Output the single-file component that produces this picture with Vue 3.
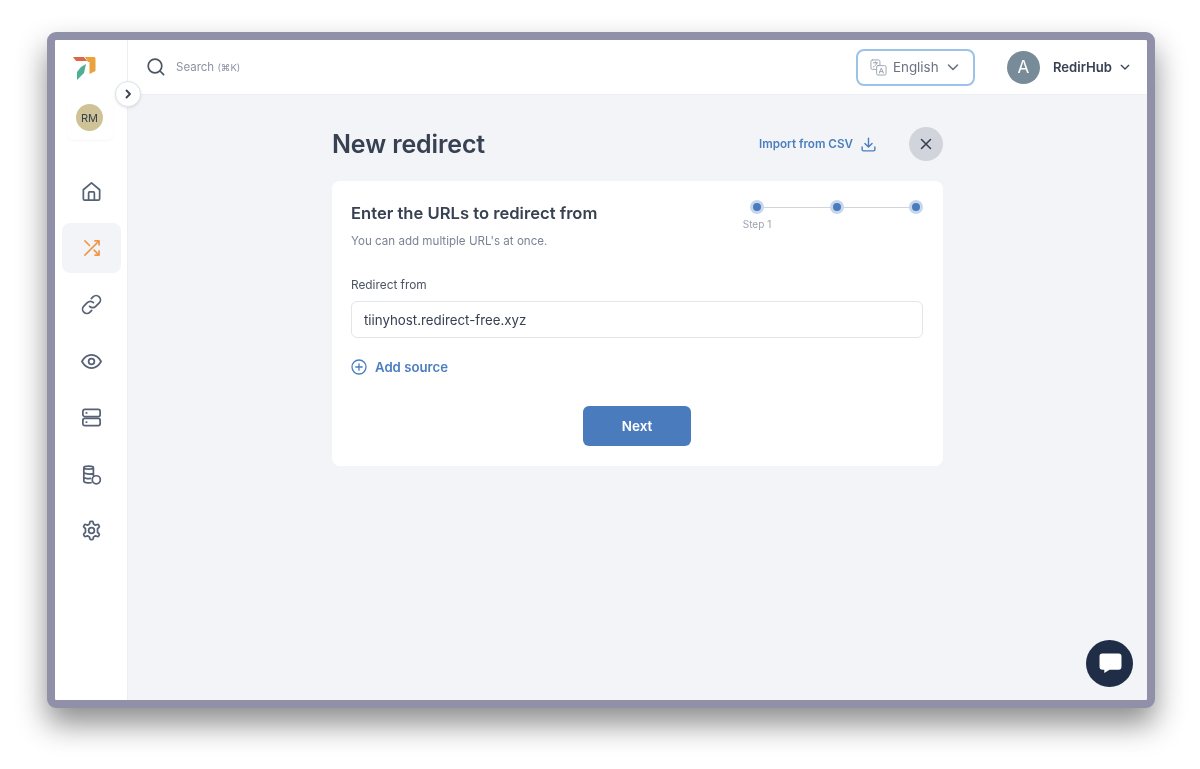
<script setup>
const navItems = [
  { id: 'home', active: false },
  { id: 'shuffle', active: true },
  { id: 'link', active: false },
  { id: 'eye', active: false },
  { id: 'server', active: false },
  { id: 'db', active: false },
  { id: 'cog', active: false }
]
</script>

<template>
  <div class="page">
    <div class="window">
      <aside class="sidebar">
        <svg class="logo" viewBox="0 0 24 24" width="24" height="24">
          <path d="M1 1 L12 1 L15 5 L4 5 Z" fill="#d9694a" />
          <path d="M13 1 L22 1 Q23.5 1 23.5 2.5 L23.5 15 L17.5 18 L17.5 6 L16 6 Z" fill="#eba23c" />
          <path d="M9 11 L14 8 L12 17 L5 24 L5 16 Z" fill="#4fae94" />
        </svg>
        <div class="org">
          <div class="org-avatar">RM</div>
        </div>
        <nav class="nav">
          <div v-for="item in navItems" :key="item.id" class="nav-item" :class="{ active: item.active }">
            <svg v-if="item.id === 'home'" viewBox="0 0 24 24" class="ico">
              <path d="M3.5 10.2 L12 3 L20.5 10.2 V19.5 A1.5 1.5 0 0 1 19 21 H5 A1.5 1.5 0 0 1 3.5 19.5 Z" />
              <path d="M9 21 V13.5 A1 1 0 0 1 10 12.5 H14 A1 1 0 0 1 15 13.5 V21" />
            </svg>
            <svg v-else-if="item.id === 'shuffle'" viewBox="0 0 24 24" class="ico orange">
              <path d="M15.5 3.5 H20.5 V8.5 M20.5 3.5 L3.5 20.5 M15.5 20.5 H20.5 V15.5 M14.5 14.5 L20.5 20.5 M3.5 3.5 L9 9" />
            </svg>
            <svg v-else-if="item.id === 'link'" viewBox="0 0 24 24" class="ico">
              <path d="M10 14 A4.5 4.5 0 0 0 16.4 14 L20 10.4 A4.5 4.5 0 0 0 13.6 4 L11.8 5.8" />
              <path d="M14 10 A4.5 4.5 0 0 0 7.6 10 L4 13.6 A4.5 4.5 0 0 0 10.4 20 L12.2 18.2" />
            </svg>
            <svg v-else-if="item.id === 'eye'" viewBox="0 0 24 24" class="ico">
              <path d="M2 12 C4.5 7.5 8 5.2 12 5.2 C16 5.2 19.5 7.5 22 12 C19.5 16.5 16 18.8 12 18.8 C8 18.8 4.5 16.5 2 12 Z" />
              <circle cx="12" cy="12" r="3" />
            </svg>
            <svg v-else-if="item.id === 'server'" viewBox="0 0 24 24" class="ico">
              <rect x="3" y="3.5" width="18" height="7.5" rx="2" />
              <rect x="3" y="13" width="18" height="7.5" rx="2" />
              <path d="M6.5 7.2 H7 M6.5 16.8 H7" />
            </svg>
            <svg v-else-if="item.id === 'db'" viewBox="0 0 24 24" class="ico">
              <path d="M4 4.8 C4 2.6 14 2.6 14 4.8 V13 M4 4.8 V19 C4 20.5 8 21 11.5 20.6 M4 4.8 C4 7 14 7 14 4.8 M4 9.5 C4 11.5 10 12 14 11 M4 14.5 C4 16 8 16.5 11 16" />
              <circle cx="17" cy="17.5" r="4.2" />
            </svg>
            <svg v-else viewBox="0 0 24 24" class="ico">
              <path d="M10.3 3.2 A1 1 0 0 1 11.3 2.4 H12.7 A1 1 0 0 1 13.7 3.2 L14.1 5.2 L16.2 6.4 L18.2 5.7 A1 1 0 0 1 19.4 6.2 L20.1 7.4 A1 1 0 0 1 19.9 8.6 L18.3 10 V14 L19.9 15.4 A1 1 0 0 1 20.1 16.6 L19.4 17.8 A1 1 0 0 1 18.2 18.3 L16.2 17.6 L14.1 18.8 L13.7 20.8 A1 1 0 0 1 12.7 21.6 H11.3 A1 1 0 0 1 10.3 20.8 L9.9 18.8 L7.8 17.6 L5.8 18.3 A1 1 0 0 1 4.6 17.8 L3.9 16.6 A1 1 0 0 1 4.1 15.4 L5.7 14 V10 L4.1 8.6 A1 1 0 0 1 3.9 7.4 L4.6 6.2 A1 1 0 0 1 5.8 5.7 L7.8 6.4 L9.9 5.2 Z" />
              <circle cx="12" cy="12" r="3" />
            </svg>
          </div>
        </nav>
      </aside>

      <button class="collapse" type="button" aria-label="Expand">
        <svg viewBox="0 0 12 12" width="12" height="12">
          <path d="M4.5 2.5 L8 6 L4.5 9.5" fill="none" stroke="#374151" stroke-width="1.8" stroke-linecap="round" stroke-linejoin="round" />
        </svg>
      </button>

      <div class="main">
        <header class="topbar">
          <div class="search">
            <svg viewBox="0 0 20 20" width="20" height="20" class="search-ico">
              <circle cx="9" cy="9" r="6.8" />
              <path d="M14 14 L17.6 17.6" />
            </svg>
            <span class="search-text">Search <small>(⌘K)</small></span>
          </div>
          <div class="lang">
            <svg viewBox="0 0 18 18" width="17" height="17" class="lang-ico">
              <rect x="1" y="1" width="9.5" height="10" rx="1.5" />
              <rect x="7" y="7" width="10" height="10" rx="1.5" fill="#fff" />
              <path d="M9.8 15 L12 9.5 L14.2 15 M10.5 13.4 H13.5 M3.5 4 H8 M5.7 3 V4 M7.2 4 C6.8 6 5.5 7.5 3.5 8.5" />
            </svg>
            <span class="lang-text">English</span>
            <svg viewBox="0 0 12 12" width="12" height="12" class="chev grey"><path d="M1.5 4 L6 8.5 L10.5 4" /></svg>
          </div>
          <div class="user">
            <div class="user-avatar">A</div>
            <span class="user-name">RedirHub</span>
            <svg viewBox="0 0 12 12" width="10" height="10" class="chev dark"><path d="M1.5 4 L6 8.5 L10.5 4" /></svg>
          </div>
        </header>

        <main class="content">
          <div class="column">
            <div class="title-row">
              <h1 class="title">New redirect</h1>
              <div class="title-actions">
                <span class="import">Import from CSV</span>
                <svg viewBox="0 0 24 24" width="17" height="17" class="import-ico">
                  <path d="M12 3 V15 M7 10.5 L12 15.5 L17 10.5 M3 15.5 V19 A2 2 0 0 0 5 21 H19 A2 2 0 0 0 21 19 V15.5" />
                </svg>
                <button class="close" type="button" aria-label="Close">
                  <svg viewBox="0 0 12 12" width="12" height="12"><path d="M1.5 1.5 L10.5 10.5 M10.5 1.5 L1.5 10.5" /></svg>
                </button>
              </div>
            </div>

            <section class="card">
              <div class="card-head">
                <div>
                  <h2 class="card-title">Enter the URLs to redirect from</h2>
                  <p class="card-sub">You can add multiple URL's at once.</p>
                </div>
                <div class="stepper">
                  <div class="step"><span class="dot"></span><span class="step-label">Step 1</span></div>
                  <span class="line"></span>
                  <div class="step"><span class="dot"></span></div>
                  <span class="line"></span>
                  <div class="step"><span class="dot"></span></div>
                </div>
              </div>

              <div class="field-label">Redirect from</div>
              <div class="input">tiinyhost.redirect-free.xyz</div>

              <div class="add">
                <svg viewBox="0 0 16 16" width="16" height="16">
                  <circle cx="8" cy="8" r="7" />
                  <path d="M8 4.8 V11.2 M4.8 8 H11.2" />
                </svg>
                <span>Add source</span>
              </div>

              <div class="actions">
                <button class="next" type="button">Next</button>
              </div>
            </section>
          </div>
        </main>

        <button class="chat" type="button" aria-label="Chat">
          <svg viewBox="0 0 24 22" width="23" height="21">
            <path d="M3.5 0.5 H20.5 A3 3 0 0 1 23.5 3.5 V14.5 A3 3 0 0 1 20.5 17.5 H11 L5.5 21 V17.5 H3.5 A3 3 0 0 1 0.5 14.5 V3.5 A3 3 0 0 1 3.5 0.5 Z" fill="#fff" />
          </svg>
        </button>
      </div>
    </div>
  </div>
</template>

<style scoped>
.page {
  width: 1200px;
  height: 769px;
  box-sizing: border-box;
  padding: 32px 45px 61px 47px;
  background: #fff;
  font-family: Inter, "Liberation Sans", sans-serif;
  overflow: hidden;
}
.window {
  position: relative;
  display: flex;
  height: 100%;
  box-sizing: border-box;
  border: 8px solid #9090a8;
  border-radius: 9px;
  background: #f2f4f8;
  box-shadow: 0 16px 30px rgba(0, 0, 0, 0.45);
  filter: blur(0.45px);
}
.sidebar {
  width: 73px;
  flex: none;
  box-sizing: border-box;
  background: #fff;
  border-right: 1px solid #eceef3;
  border-radius: 3px 0 0 3px;
  display: flex;
  flex-direction: column;
  align-items: center;
  padding-top: 16px;
}
.logo {
  margin-left: -14px;
  flex: none;
}
.org {
  margin-top: 16px;
  margin-left: -3px;
  width: 46px;
  height: 44px;
  box-sizing: border-box;
  border-radius: 6px;
  box-shadow: 0 1px 2px rgba(0, 0, 0, 0.04);
  display: flex;
  justify-content: center;
  padding-top: 8px;
}
.org-avatar {
  width: 27px;
  height: 27px;
  border-radius: 50%;
  background: #cfc296;
  color: #374151;
  font-size: 11px;
  font-weight: 400;
  display: flex;
  align-items: center;
  justify-content: center;
}
.nav {
  margin-top: 26.5px;
  width: 100%;
  display: flex;
  flex-direction: column;
  align-items: center;
  gap: 6.5px;
}
.nav-item {
  width: 59px;
  height: 50px;
  margin-left: 1px;
  border-radius: 8px;
  display: flex;
  align-items: center;
  justify-content: center;
}
.nav-item.active {
  background: #f2f4f8;
}
.ico {
  width: 23px;
  height: 23px;
  fill: none;
  stroke: #566175;
  stroke-width: 1.8;
  stroke-linecap: round;
  stroke-linejoin: round;
}
.ico.orange {
  width: 20px;
  height: 20px;
  stroke: #f0984a;
  stroke-width: 2;
}
.collapse {
  position: absolute;
  left: 60px;
  top: 41px;
  width: 26px;
  height: 26px;
  padding: 0;
  border: 1px solid #dfe2e8;
  border-radius: 50%;
  background: #fff;
  box-shadow: 0 1px 3px rgba(0, 0, 0, 0.1);
  display: flex;
  align-items: center;
  justify-content: center;
  z-index: 2;
}
.main {
  position: relative;
  flex: 1;
  min-width: 0;
  display: flex;
  flex-direction: column;
}
.topbar {
  height: 55px;
  flex: none;
  box-sizing: border-box;
  background: #fff;
  border-bottom: 1px solid #eceef3;
  border-radius: 0 3px 0 0;
  display: flex;
  align-items: center;
  padding: 0 17px 0 18px;
}
.search {
  display: flex;
  align-items: center;
  gap: 10px;
  margin-right: auto;
}
.search-ico {
  fill: none;
  stroke: #4b5563;
  stroke-width: 1.7;
  stroke-linecap: round;
}
.search-text {
  font-size: 11.5px;
  color: #8a93a3;
}
.search-text small {
  font-size: 9.5px;
}
.lang {
  width: 119px;
  height: 37px;
  box-sizing: border-box;
  border: 2px solid #9dc2ea;
  border-radius: 8px;
  display: flex;
  align-items: center;
  padding-left: 12px;
  margin-right: 32px;
}
.lang-ico {
  fill: none;
  stroke: #9ca3af;
  stroke-width: 1;
  stroke-linejoin: round;
  stroke-linecap: round;
  flex: none;
}
.lang-text {
  margin-left: 6px;
  font-size: 13.4px;
  color: #6b7280;
}
.chev {
  fill: none;
  stroke-width: 1.6;
  stroke-linecap: round;
  stroke-linejoin: round;
  flex: none;
}
.chev.grey {
  stroke: #6b7280;
  margin-left: 8px;
}
.chev.dark {
  stroke: #374151;
  margin-left: 8px;
}
.user {
  display: flex;
  align-items: center;
}
.user-avatar {
  width: 33px;
  height: 33px;
  border-radius: 50%;
  background: #778c98;
  color: #fff;
  font-size: 17px;
  display: flex;
  align-items: center;
  justify-content: center;
}
.user-name {
  margin-left: 13px;
  font-size: 13.1px;
  font-weight: 600;
  color: #374151;
}
.content {
  flex: 1;
  display: flex;
  justify-content: center;
  padding: 32px 1px 0 0;
  min-height: 0;
}
.column {
  width: 611px;
}
.title-row {
  display: flex;
  align-items: center;
  justify-content: space-between;
  height: 34px;
}
.title {
  margin: 0 0 0 0.5px;
  font-size: 25px;
  font-weight: 600;
  letter-spacing: -0.12px;
  color: #374151;
}
.title-actions {
  display: flex;
  align-items: center;
}
.import {
  font-size: 11.65px;
  font-weight: 600;
  color: #4a7ebf;
}
.import-ico {
  margin-left: 7px;
  fill: none;
  stroke: #4a7ebf;
  stroke-width: 2;
  stroke-linecap: round;
  stroke-linejoin: round;
}
.close {
  margin-left: 31.5px;
  width: 34px;
  height: 34px;
  padding: 0;
  border: 0;
  border-radius: 50%;
  background: #d1d5db;
  display: flex;
  align-items: center;
  justify-content: center;
}
.close svg {
  fill: none;
  stroke: #374151;
  stroke-width: 1.6;
  stroke-linecap: round;
}
.card {
  margin-top: 20px;
  background: #fff;
  border-radius: 8px;
  padding: 20px 19.5px;
}
.card-head {
  display: flex;
  justify-content: space-between;
  align-items: flex-start;
}
.card-title {
  margin: 2px 0 0;
  font-size: 16.6px;
  line-height: 20px;
  font-weight: 600;
  color: #374151;
}
.card-sub {
  margin: 10px 0 0;
  font-size: 11.6px;
  line-height: 16px;
  color: #7b8494;
}
.stepper {
  display: flex;
  align-items: flex-start;
  margin-top: -1px;
}
.step {
  position: relative;
  width: 14px;
  height: 14px;
}
.dot {
  display: block;
  box-sizing: border-box;
  width: 14px;
  height: 14px;
  border: 3.5px solid #c6d6ec;
  border-radius: 50%;
  background: #4a7bbd;
}
.step-label {
  position: absolute;
  top: 17px;
  left: 50%;
  transform: translateX(-50%);
  font-size: 10px;
  line-height: 14px;
  white-space: nowrap;
  color: #9ca3af;
}
.line {
  width: 65.5px;
  height: 1.5px;
  margin-top: 6.5px;
  background: #d1d5db;
}
.field-label {
  margin-top: 28px;
  font-size: 11.85px;
  line-height: 16px;
  color: #4b5563;
}
.input {
  margin-top: 8px;
  height: 37px;
  box-sizing: border-box;
  padding: 0 12px;
  border: 1px solid #e2e5ea;
  border-radius: 6px;
  display: flex;
  align-items: center;
  font-size: 13.3px;
  color: #374151;
}
.add {
  margin-top: 21px;
  display: flex;
  align-items: center;
  gap: 8px;
  font-size: 13.2px;
  font-weight: 600;
  color: #4a7ebf;
}
.add svg {
  fill: none;
  stroke: #4a7ebf;
  stroke-width: 1.3;
  stroke-linecap: round;
}
.actions {
  margin-top: 31px;
  display: flex;
  justify-content: center;
}
.next {
  width: 108px;
  height: 40px;
  border: 0;
  border-radius: 6px;
  background: #4a7bbd;
  color: #fff;
  font-family: inherit;
  font-size: 13.5px;
  font-weight: 600;
}
.chat {
  position: absolute;
  right: 14px;
  bottom: 13px;
  width: 47px;
  height: 47px;
  padding: 0 0 0 1px;
  border: 0;
  border-radius: 50%;
  background: #1f2d47;
  display: flex;
  align-items: center;
  justify-content: center;
}
</style>

<style>
html, body {
  margin: 0;
  background: #fff;
}
</style>
